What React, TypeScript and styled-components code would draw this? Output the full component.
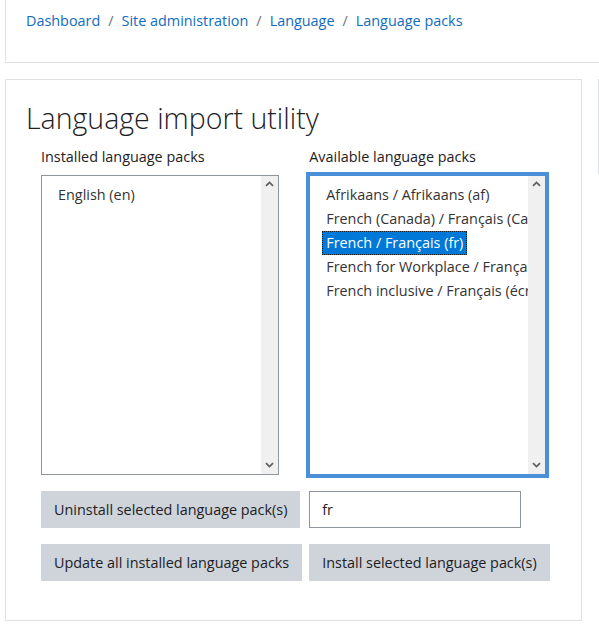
import React from "react";
import styled, { createGlobalStyle } from "styled-components";

const GlobalStyle = createGlobalStyle`
  html, body { margin: 0; padding: 0; background: #fff; overflow: hidden; }
  body {
    font-family: "Open Sans", "Noto Sans", sans-serif;
    font-size: 14.4px;
    color: #1d2125;
  }
  * { box-sizing: border-box; }
`;

const Page = styled.div`
  width: 1000px;
  padding-left: 5px;
`;

const TopCard = styled.header`
  border: 1px solid #dee2e6;
  border-top: 0;
  padding: 10px 20px 31px;
`;

const Crumbs = styled.ol`
  list-style: none;
  margin: 0;
  padding: 0;
  display: flex;
  line-height: 21px;
`;

const Crumb = styled.li`
  & + &::before {
    content: "/";
    padding: 0 8px;
    color: #6a737b;
  }
`;

const CrumbLink = styled.a`
  color: #0f6cbf;
  text-decoration: none;
`;

const MainRow = styled.div`
  display: flex;
  align-items: flex-start;
  gap: 16px;
  margin-top: 16px;
`;

const MainCard = styled.section`
  width: 577px;
  border: 1px solid #dee2e6;
  padding: 20px;
`;

const SideCard = styled.aside`
  width: 300px;
  height: 95px;
  border: 1px solid #dee2e6;
`;

const Title = styled.h2`
  margin: 0 0 10px;
  font-size: 28.5px;
  font-weight: 300;
  line-height: 36px;
  color: #1d2125;
`;

const FormGrid = styled.div`
  margin: 0 0 19px 15px;
  display: grid;
  grid-template-columns: auto auto;
  justify-content: start;
  justify-items: start;
  column-gap: 7px;
`;

const Label = styled.label`
  line-height: 21px;
  margin-bottom: 8px;
`;

const ListBox = styled.div<{ $focused?: boolean }>`
  width: ${(p) => (p.$focused ? "237px" : "238px")};
  height: 300px;
  display: flex;
  background: #fff;
  border: 1px solid ${(p) => (p.$focused ? "#4a90d9" : "#8f959e")};
  box-shadow: ${(p) => (p.$focused ? "0 0 0 3px #4a90d9" : "none")};
`;

const OptionList = styled.div`
  flex: 1;
  min-width: 0;
  overflow: hidden;
  padding: 7px 0 0 12px;
`;

const Option = styled.div<{ $selected?: boolean }>`
  width: max-content;
  padding: 0 4px;
  line-height: 24px;
  white-space: nowrap;
  color: ${(p) => (p.$selected ? "#fff" : "#333")};
  background: ${(p) => (p.$selected ? "#0078d7" : "transparent")};
  outline: ${(p) => (p.$selected ? "1px dotted #1d2125" : "none")};
  outline-offset: -1px;
`;

const ScrollTrack = styled.div`
  width: 17px;
  flex: none;
  background: #f0f0f0;
  display: flex;
  flex-direction: column;
  justify-content: space-between;
  align-items: center;
  padding: 5px 0 6px;
`;

const Button = styled.button`
  margin-top: 16px;
  background: #ced4da;
  border: 1px solid #ced4da;
  border-radius: 0;
  padding: 7px 12px;
  line-height: 21px;
  font-family: inherit;
  font-size: 14.4px;
  color: #1d2125;
  white-space: nowrap;
`;

const TextInput = styled.input`
  margin-top: 16px;
  width: 212px;
  height: 37px;
  border: 1px solid #8f959e;
  border-radius: 0;
  padding: 0 12px;
  font-family: inherit;
  font-size: 14.4px;
  color: #1d2125;
  outline: none;
`;

const Arrow = ({ down }: { down?: boolean }) => (
  <svg width="9" height="6" viewBox="0 0 9 6">
    <path
      d={down ? "M1 1.2 L4.5 4.6 L8 1.2" : "M1 4.8 L4.5 1.4 L8 4.8"}
      fill="none"
      stroke="#606060"
      strokeWidth="1.8"
    />
  </svg>
);

const Select = ({
  items,
  selected,
  focused,
}: {
  items: string[];
  selected?: number;
  focused?: boolean;
}) => (
  <ListBox $focused={focused}>
    <OptionList>
      {items.map((t, i) => (
        <Option key={t} $selected={i === selected}>
          {t}
        </Option>
      ))}
    </OptionList>
    <ScrollTrack>
      <Arrow />
      <Arrow down />
    </ScrollTrack>
  </ListBox>
);

const available = [
  "Afrikaans / Afrikaans (af)",
  "French (Canada) / Français (Canada) (fr_ca)",
  "French / Français (fr)",
  "French for Workplace / Français pour le Travail (fr_wp)",
  "French inclusive / Français (écriture inclusive) (fr_incl)",
];

export default function App() {
  return (
    <>
      <GlobalStyle />
      <Page>
        <TopCard>
          <Crumbs>
            <Crumb><CrumbLink href="#">Dashboard</CrumbLink></Crumb>
            <Crumb><CrumbLink href="#">Site administration</CrumbLink></Crumb>
            <Crumb><CrumbLink href="#">Language</CrumbLink></Crumb>
            <Crumb><CrumbLink href="#">Language packs</CrumbLink></Crumb>
          </Crumbs>
        </TopCard>
        <MainRow>
          <MainCard>
            <Title>Language import utility</Title>
            <FormGrid>
              <Label>Installed language packs</Label>
              <Label>Available language packs</Label>
              <Select items={["English (en)"]} />
              <Select items={available} selected={2} focused />
              <Button>Uninstall selected language pack(s)</Button>
              <TextInput defaultValue="fr" />
              <Button>Update all installed language packs</Button>
              <Button>Install selected language pack(s)</Button>
            </FormGrid>
          </MainCard>
          <SideCard />
        </MainRow>
      </Page>
    </>
  );
}
